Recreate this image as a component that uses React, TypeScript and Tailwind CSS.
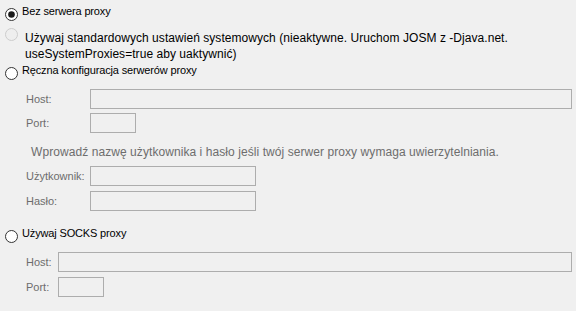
import React from "react";

function Radio({ checked = false, disabled = false }: { checked?: boolean; disabled?: boolean }) {
  return (
    <svg width="13" height="13" viewBox="0 0 13 13" className="shrink-0 block">
      <circle
        cx="6.5"
        cy="6.5"
        r="6"
        fill={disabled ? "#eeeeee" : "#ffffff"}
        stroke={disabled ? "#cccccc" : "#333333"}
        strokeWidth="1"
      />
      {checked && <circle cx="6.5" cy="6.5" r="3.3" fill="#1a1a1a" />}
    </svg>
  );
}

function Field({ className }: { className: string }) {
  return <div className={"h-[20px] border border-[#adadad] bg-[#f0f0f0] " + className} />;
}

export default function App() {
  return (
    <div className="w-[576px] h-[311px] bg-[#f0f0f0] overflow-hidden font-['Liberation_Sans',Arial,sans-serif] text-black">
      {/* Row 1 */}
      <div className="flex h-[26px] pl-[5px]">
        <div className="mt-[8px]">
          <Radio checked />
        </div>
        <span className="ml-[4px] mt-[5px] text-[11px] leading-[13px] tracking-[-0.15px]">Bez serwera proxy</span>
      </div>
      {/* Row 2 */}
      <div className="flex h-[36px] pl-[5px]">
        <div className="mt-[2px]">
          <Radio disabled />
        </div>
        <span className="ml-[7px] mt-[4px] text-[12px] leading-[16px] tracking-[0.05px]">
          Używaj standardowych ustawień systemowych (nieaktywne. Uruchom JOSM z -Djava.net.
          <br />
          useSystemProxies=true aby uaktywnić)
        </span>
      </div>
      {/* Row 3 */}
      <div className="flex h-[20px] pl-[5px]">
        <div className="mt-[5px]">
          <Radio />
        </div>
        <span className="ml-[4px] mt-[2px] text-[11px] leading-[13px] tracking-[-0.15px]">Ręczna konfiguracja serwerów proxy</span>
      </div>
      {/* Host */}
      <div className="flex items-center mt-[7px] pl-[26px] pr-[4px] text-[11px] text-[#6d6d6d]">
        <span className="w-[64px]">Host:</span>
        <Field className="flex-1" />
      </div>
      <div className="flex items-center mt-[4px] pl-[26px] text-[11px] text-[#6d6d6d]">
        <span className="w-[64px]">Port:</span>
        <Field className="w-[46px]" />
      </div>
      <div className="mt-[11px] pl-[31px] text-[12px] leading-[16px] tracking-[0.07px] text-[#6d6d6d]">
        Wprowadź nazwę użytkownika i hasło jeśli twój serwer proxy wymaga uwierzytelniania.
      </div>
      <div className="flex items-center mt-[6px] pl-[26px] text-[11px] text-[#6d6d6d]">
        <span className="w-[64px]">Użytkownik:</span>
        <Field className="w-[166px]" />
      </div>
      <div className="flex items-center mt-[5px] pl-[26px] text-[11px] text-[#6d6d6d]">
        <span className="w-[64px]">Hasło:</span>
        <Field className="w-[166px]" />
      </div>
      {/* SOCKS */}
      <div className="flex h-[20px] pl-[5px] mt-[13px]">
        <div className="mt-[6px]">
          <Radio />
        </div>
        <span className="ml-[4px] mt-[3px] text-[11px] leading-[13px] tracking-[-0.15px]">Używaj SOCKS proxy</span>
      </div>
      <div className="flex items-center mt-[8px] pl-[26px] pr-[4px] text-[11px] text-[#6d6d6d]">
        <span className="w-[32px]">Host:</span>
        <Field className="flex-1" />
      </div>
      <div className="flex items-center mt-[5px] pl-[26px] text-[11px] text-[#6d6d6d]">
        <span className="w-[32px]">Port:</span>
        <Field className="w-[46px]" />
      </div>
    </div>
  );
}
